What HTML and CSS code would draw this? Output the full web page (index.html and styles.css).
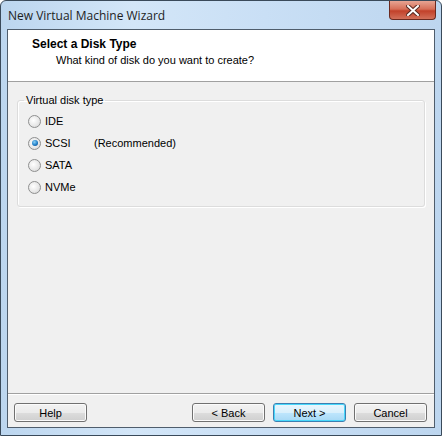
FILE: index.html
```html
<html>
<head>
	<title>New Virtual Machine Wizard</title>
	<link rel="stylesheet" href="styles.css">
</head>
<body>

	<div class="window">
		<div class="titlebar">
			<span class="title">New Virtual Machine Wizard</span>
			<div class="close">
				<svg width="14" height="11" viewBox="0 0 14 11">
					<path d="M2 1 L12 10 M12 1 L2 10" stroke="#5a2a22" stroke-width="4" stroke-linecap="square"/>
					<path d="M2 1 L12 10 M12 1 L2 10" stroke="#fff" stroke-width="2" stroke-linecap="square"/>
				</svg>
			</div>
		</div>

		<div class="client">
			<div class="header">
				<div class="heading">Select a Disk Type</div>
				<div class="subheading">What kind of disk do you want to create?</div>
			</div>

			<div class="body">
				<fieldset class="group">
					<legend>Virtual disk type</legend>
					<label class="radio"><span class="dot"></span>IDE</label>
					<label class="radio"><span class="dot checked"></span><span class="name">SCSI</span>(Recommended)</label>
					<label class="radio"><span class="dot"></span>SATA</label>
					<label class="radio"><span class="dot"></span>NVMe</label>
				</fieldset>
			</div>

			<div class="footer">
				<button>Help</button>
				<div class="nav">
					<button>&lt; Back</button>
					<button class="default">Next &gt;</button>
					<button>Cancel</button>
				</div>
			</div>
		</div>
	</div>

</body>
</html>
```

FILE: styles.css
```css
body {
	margin: 0;
	font-family: "Liberation Sans", sans-serif;
	font-size: 11px;
	color: #000;
}

.window {
	width: 442px;
	height: 436px;
	box-sizing: border-box;
	background: linear-gradient(to right, #bcd6ef 0%, #d3e6f8 30%, #c9dff5 60%, #bdd6ef 100%);
	border: 1px solid #3a4a5a;
	border-radius: 6px 6px 0 0;
	display: flex;
	flex-direction: column;
	padding: 0 6px 7px 6px;
}

.titlebar {
	height: 28px;
	display: flex;
	justify-content: space-between;
	align-items: flex-start;
}

.title {
	font-family: "Open Sans", sans-serif;
	font-size: 12px;
	margin-top: 6px;
	padding-left: 1px;
	color: #1e1e1e;
}

.close {
	width: 45px;
	height: 18px;
	margin-right: -1px;
	border: 1px solid #6b2a20;
	border-top: none;
	border-radius: 0 0 4px 4px;
	background: linear-gradient(to bottom, #e7a493 0%, #d66f58 45%, #c2412a 55%, #d2705a 100%);
	display: flex;
	align-items: center;
	justify-content: center;
}

.client {
	flex: 1;
	border: 1px solid #4f5d6c;
	background: #f0f0f0;
	display: flex;
	flex-direction: column;
}

.header {
	background: #fff;
	height: 52px;
	border-bottom: 1px solid #a0a0a0;
	padding: 7px 0 0 24px;
	box-sizing: border-box;
}

.heading {
	font-weight: bold;
	font-size: 12px;
	height: 14px;
}

.subheading {
	padding-left: 24px;
	margin-top: 3px;
}

.body {
	flex: 1;
	padding: 12px 9px 0 9px;
}

.group {
	margin: 0;
	border: 1px solid #dcdcdc;
	border-radius: 3px;
	box-shadow: inset 1px 1px 0 #fff, 1px 1px 0 #fff;
	padding: 4px 8px 10px 10px;
	height: 113px;
	box-sizing: border-box;
}

legend {
	padding: 0 2px;
	margin-left: -4px;
}

.radio {
	display: flex;
	align-items: center;
	height: 22px;
}

.dot {
	width: 11px;
	height: 11px;
	border: 1px solid #8e8f8f;
	border-radius: 50%;
	background: radial-gradient(circle at 40% 40%, #fff 0%, #e6e6e6 60%, #cfcfcf 100%);
	margin-right: 4px;
	display: flex;
	align-items: center;
	justify-content: center;
}

.dot.checked::after {
	content: "";
	width: 6px;
	height: 6px;
	border-radius: 50%;
	background: radial-gradient(circle at 40% 35%, #8ad0f5 0%, #1e7ec8 55%, #0c3a6e 100%);
}

.name {
	width: 49px;
}

.footer {
	height: 34px;
	box-sizing: border-box;
	border-top: 1px solid #a0a0a0;
	box-shadow: inset 0 1px 0 #fff;
	display: flex;
	justify-content: space-between;
	align-items: flex-start;
	padding: 9px 7px 0 6px;
}

.nav {
	display: flex;
	gap: 8px;
}

button {
	width: 73px;
	height: 19px;
	font-family: "Liberation Sans", sans-serif;
	font-size: 11px;
	color: #000;
	padding: 0;
	border: 1px solid #707070;
	border-radius: 3px;
	background: linear-gradient(to bottom, #f2f2f2 0%, #ebebeb 50%, #dddddd 51%, #cfcfcf 100%);
	box-shadow: inset 0 0 0 1px #fbfbfb;
}

button.default {
	border-color: #3c7fb1;
	box-shadow: inset 0 0 0 1px #48d8fb;
	background: linear-gradient(to bottom, #eaf6fd 0%, #d9f0fc 50%, #bee6fd 51%, #a7d9f5 100%);
}
```
